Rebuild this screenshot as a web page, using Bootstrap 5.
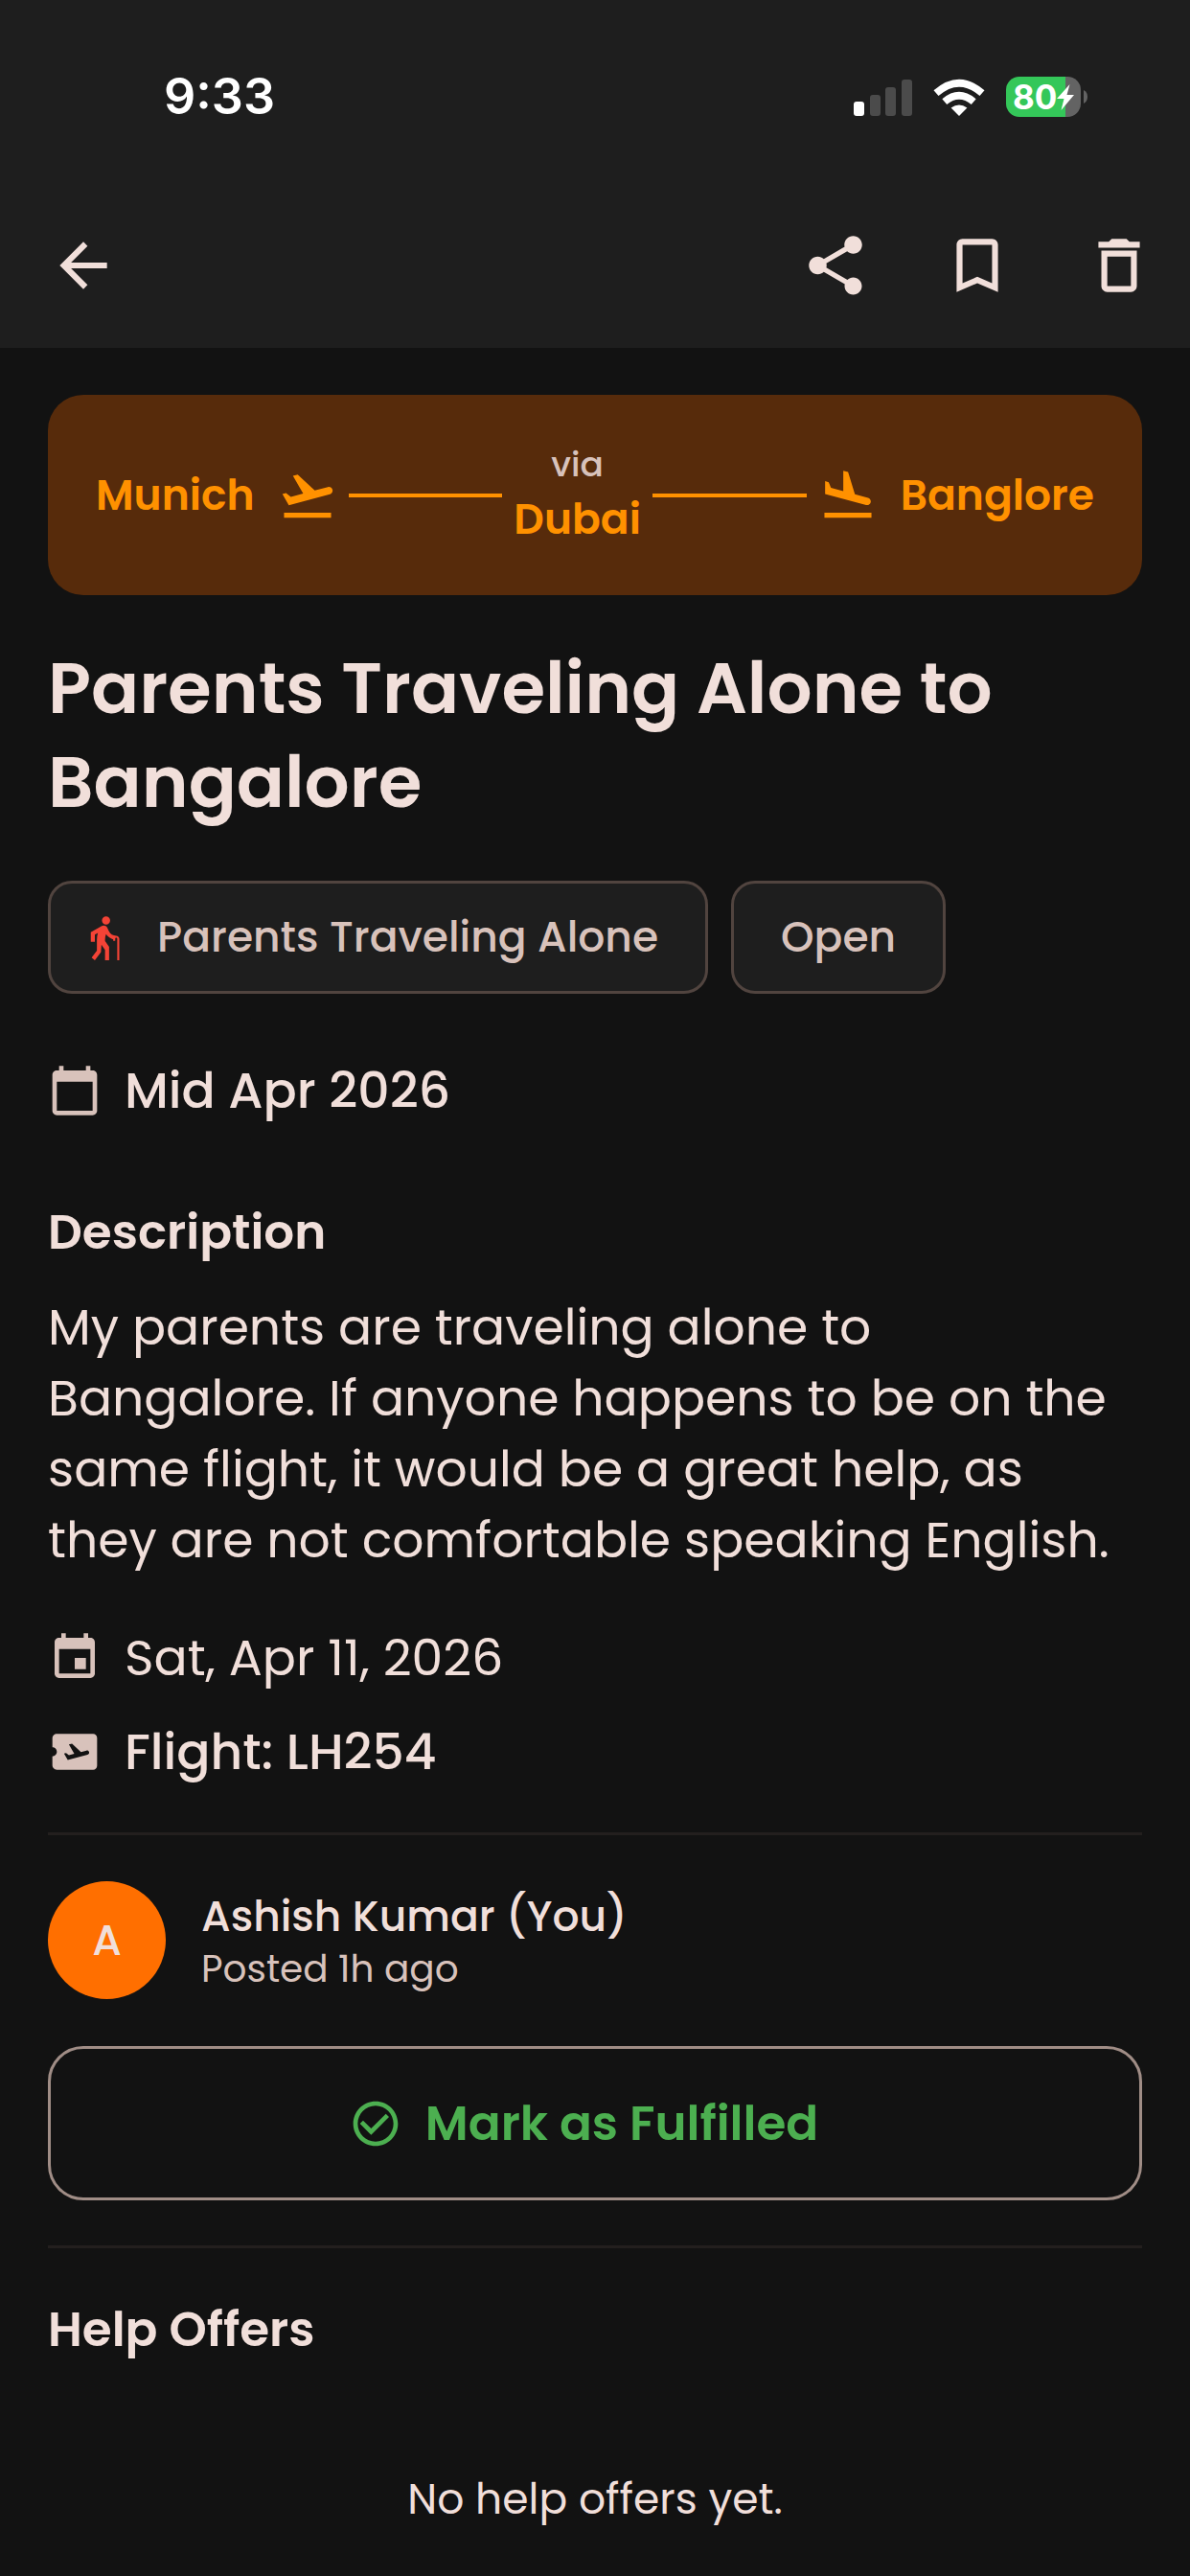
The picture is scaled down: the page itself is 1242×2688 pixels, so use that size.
<!DOCTYPE html>
<html lang="en" data-bs-theme="dark">
<head>
<meta charset="utf-8">
<meta name="viewport" content="width=device-width, initial-scale=1">
<title>Parents Traveling Alone to Bangalore</title>
<link rel="stylesheet" href="https://cdn.jsdelivr.net/npm/bootstrap@5.3.0/dist/css/bootstrap.min.css">
<style>
:root {
  --page: #121212;
  --surface: #1e1e1e;
  --ink: #f1dfda;
  --ink-soft: #d8c2bb;
  --accent: #ff9100;
}
body {
  background: var(--page);
  color: var(--ink);
  font-family: Poppins, Inter, "Open Sans", sans-serif;
  font-size: 44px;
  line-height: 64px;
}
h1, h2 { color: var(--ink); }
svg { display: block; flex: none; fill: currentColor; }

/* type scale */
.t-title { font-size: 74px; line-height: 98px; font-weight: 600; margin: 48px 0 54px; }
.t-heading { font-size: 50px; line-height: 74px; font-weight: 600; margin: 0; }
.t-line { font-size: 52px; line-height: 74px; }
.t-body { font-size: 52px; line-height: 74px; margin: 25px 0 49px; }
.t-small { font-size: 39px; color: var(--ink-soft); }
.w-medium { font-weight: 500; }

/* header */
.top-area { background: var(--surface); }
.status-row { color: #fff; padding: 67px 107px 55px 171px; font-family: Inter, sans-serif; }
.status-time { font-size: 52px; line-height: 68px; }
.status-icons { gap: 22px; }
.battery { gap: 3px; }
.battery-body {
  width: 78px; height: 42px; border-radius: 14px; padding-left: 7px;
  background: linear-gradient(90deg, #34c759 62px, #636363 62px);
  font-size: 35px; line-height: 42px;
}
.app-bar { height: 173px; }
.icon-btn { width: 148px; height: 148px; border: 0; color: var(--ink); }
.icon-btn.leading { width: 173px; }

.screen { padding: 49px 50px; }

/* route */
.route { background: #572b0b; color: var(--accent); border-radius: 37px; min-height: 209px; padding: 0 50px; gap: 12px; }
.route-end { gap: 24px; }
.route-leg { height: 4px; background: var(--accent); }
.route-via { font-size: 36px; line-height: 50px; color: var(--ink-soft); }

/* chips */
.chips { gap: 24px; margin-bottom: 64px; }
.chip {
  background: var(--surface); color: var(--ink-soft); border: 3px solid #51443f;
  border-radius: 25px; padding: 24px 49px;
}
.chip.with-icon { padding-left: 29px; gap: 31px; }
.chip svg { color: #f44336; }

.info { gap: 24px; }
.info svg { color: var(--ink-soft); }
.details { margin-top: 74px; }
.rule { height: 3px; background: #231f1e; opacity: 1; border: 0; margin: 47px 0 48px; }

/* author */
.author { gap: 37px; margin-bottom: 49px; }
.avatar { width: 123px; height: 123px; background: #ff6f00; }
.author-name { line-height: 60px; }
.author-time { line-height: 50px; }

.btn-fulfil {
  --bs-btn-color: #4caf50; --bs-btn-hover-color: #4caf50;
  --bs-btn-border-color: #a08d86; --bs-btn-hover-border-color: #a08d86;
  --bs-btn-border-width: 3px; --bs-btn-border-radius: 37px;
  --bs-btn-padding-y: 40px; --bs-btn-font-size: 50px; --bs-btn-font-weight: 600;
  line-height: 75px; gap: 24px; padding-right: 36px;
}
.empty { margin-top: 108px; }
</style>
</head>
<body>
<header class="top-area">
  <div class="status-row d-flex align-items-center justify-content-between">
    <span class="status-time fw-semibold">9:33</span>
    <div class="status-icons d-flex align-items-center">
      <svg width="61" height="39" viewBox="0 0 61 39" role="img" aria-label="Signal">
        <rect x="0" y="24" width="11" height="15" rx="3"/>
        <g fill="#4b4b4b"><rect x="17" y="17" width="11" height="22" rx="3"/><rect x="33" y="9" width="11" height="30" rx="3"/><rect x="50" y="1" width="11" height="38" rx="3"/></g>
      </svg>
      <svg width="54" height="39" viewBox="0 0 54 39" role="img" aria-label="Wi-Fi">
        <path d="M27 39 18.600 30.400Q27 24.600 35.400 30.400Z"/>
        <g fill="none" stroke="#fff" stroke-width="7.600"><path d="M3 15.200Q27-5.800 51 15.200"/><path d="M11.800 24.200Q27 11.400 42.200 24.200"/></g>
      </svg>
      <div class="battery d-flex align-items-center">
        <div class="battery-body d-flex align-items-center fw-bold">80
          <svg width="18" height="27" viewBox="0 0 18 27"><path d="M13.500 0 0 15h7.500L4.500 27 18 11h-7.500z"/></svg>
        </div>
        <svg width="4" height="14" viewBox="0 0 4 14"><path fill="#636363" d="M0 0q4 2 4 7t-4 7z"/></svg>
      </div>
    </div>
  </div>
  <nav class="app-bar d-flex align-items-center justify-content-between" aria-label="Actions">
    <button type="button" class="icon-btn leading bg-transparent p-0 d-flex align-items-center justify-content-center" aria-label="Back">
      <svg width="74" height="74" viewBox="0 0 24 24"><path d="M20 11H7.830l5.590-5.590L12 4l-8 8 8 8 1.410-1.410L7.830 13H20v-2z"/></svg>
    </button>
    <div class="d-flex">
      <button type="button" class="icon-btn bg-transparent p-0 d-flex align-items-center justify-content-center" aria-label="Share">
        <svg width="74" height="74" viewBox="0 0 24 24"><path d="M18 16.080c-.76 0-1.440.3-1.960.77L8.910 12.700c.05-.23.09-.46.09-.7s-.04-.47-.09-.7l7.050-4.110c.54.5 1.250.81 2.040.81 1.660 0 3-1.340 3-3s-1.340-3-3-3-3 1.340-3 3c0 .24.04.47.09.7L8.040 9.810C7.500 9.310 6.790 9 6 9c-1.660 0-3 1.340-3 3s1.340 3 3 3c.79 0 1.500-.31 2.040-.81l7.120 4.160c-.05.21-.08.43-.08.65 0 1.610 1.310 2.920 2.920 2.920s2.920-1.310 2.920-2.920-1.310-2.920-2.920-2.920z"/></svg>
      </button>
      <button type="button" class="icon-btn bg-transparent p-0 d-flex align-items-center justify-content-center" aria-label="Bookmark">
        <svg width="74" height="74" viewBox="0 0 24 24"><path d="M17 3H7c-1.100 0-2 .9-2 2v16l7-3 7 3V5c0-1.100-.9-2-2-2zm0 15-5-2.180L7 18V5h10v13z"/></svg>
      </button>
      <button type="button" class="icon-btn bg-transparent p-0 d-flex align-items-center justify-content-center" aria-label="Delete">
        <svg width="74" height="74" viewBox="0 0 24 24"><path d="M6 19c0 1.100.9 2 2 2h8c1.100 0 2-.9 2-2V7H6v12zM8 9h8v10H8V9zm7.500-5-1-1h-5l-1 1H5v2h14V4h-3.500z"/></svg>
      </button>
    </div>
  </nav>
</header>

<main class="screen">
  <section class="route d-flex align-items-center fw-semibold" aria-label="Route">
    <div class="route-end d-flex align-items-center">
      <span>Munich</span>
      <svg width="62" height="62" viewBox="0 0 24 24"><path d="M2.500 19h19v2h-19zM22.070 9.640c-.21-.8-1.040-1.280-1.840-1.060L14.920 10l-6.900-6.430-1.930.51 4.140 7.170-4.970 1.330-1.970-1.540-1.450.39 2.590 4.490L21 11.490c.81-.23 1.280-1.050 1.070-1.850z"/></svg>
    </div>
    <div class="route-leg flex-fill"></div>
    <div class="text-center">
      <div class="route-via w-medium">via</div>
      <div>Dubai</div>
    </div>
    <div class="route-leg flex-fill"></div>
    <div class="route-end d-flex align-items-center">
      <svg width="62" height="62" viewBox="0 0 24 24"><path d="M2.500 19h19v2h-19zM19.340 15.850c.8.210 1.620-.26 1.840-1.060.21-.8-.26-1.620-1.060-1.840l-5.310-1.420-2.760-9.020L10.120 2v8.280L5.150 8.950l-.93-2.320-1.450-.39v5.170l16.570 4.440z"/></svg>
      <span>Banglore</span>
    </div>
  </section>

  <h1 class="t-title">Parents Traveling Alone to Bangalore</h1>

  <div class="chips d-flex flex-wrap w-medium">
    <div class="chip with-icon d-flex align-items-center">
      <svg width="51" height="51" viewBox="0 0 24 24"><path d="M13.500 5.500c1.100 0 2-.9 2-2s-.9-2-2-2-2 .9-2 2 .9 2 2 2zM20 12.500V23h-1V12.500c0-.28-.22-.5-.5-.5s-.5.22-.5.5v1h-1v-.69c-1.460-.38-2.700-1.290-3.510-2.520-.31.87-.49 1.780-.49 2.710 0 .23.02.46.03.69L15 16.500V23h-2v-5l-1.780-2.540L11 19l-3 4-1.600-1.200L9 18.330V13c0-1.150.18-2.290.5-3.390L8 10.460V14H6V9.300l5.400-3.070v.01c.59-.31 1.320-.33 1.940.03.36.21.63.51.8.85l.79 1.670C15.580 10.100 16.940 11 18.500 11c.83 0 1.500.67 1.500 1.500z"/></svg>
      <span>Parents Traveling Alone</span>
    </div>
    <div class="chip">Open</div>
  </div>

  <div class="info d-flex align-items-center t-line w-medium">
    <svg width="56" height="56" viewBox="0 0 24 24"><path d="M20 3h-1V1h-2v2H7V1H5v2H4c-1.100 0-2 .9-2 2v16c0 1.100.9 2 2 2h16c1.100 0 2-.9 2-2V5c0-1.100-.9-2-2-2zm0 18H4V8h16v13z"/></svg>
    <span>Mid Apr 2026</span>
  </div>

  <section class="details">
    <h2 class="t-heading">Description</h2>
    <p class="t-body">My parents are traveling alone to Bangalore. If anyone happens to be on the same flight, it would be a great help, as they are not comfortable speaking English.</p>
  </section>

  <div class="info d-flex align-items-center t-line mb-4">
    <svg width="56" height="56" viewBox="0 0 24 24"><path d="M17 12h-5v5h5v-5zM16 1v2H8V1H6v2H5c-1.110 0-1.990.9-1.990 2L3 19c0 1.100.89 2 2 2h14c1.100 0 2-.9 2-2V5c0-1.100-.9-2-2-2h-1V1h-2zm3 18H5V8h14v11z"/></svg>
    <span>Sat, Apr 11, 2026</span>
  </div>
  <div class="info d-flex align-items-center t-line w-medium">
    <svg width="56" height="56" viewBox="0 0 24 24"><path d="M20.190 4H4C2.900 4 2.010 4.900 2.010 6v4c1.100 0 1.990.9 1.990 2s-.89 2-2 2v4c0 1.100.9 2 2 2h16.190c.99 0 1.810-.82 1.810-1.810V5.810C22 4.810 21.190 4 20.190 4zM17.730 13.300l-8.860 2.360-1.660-2.880.93-.25 1.260.99 2.390-.64-2.400-4.160 1.400-.38 4.010 3.740 2.440-.65c.51-.14 1.040.17 1.180.68.130.51-.17 1.040-.69 1.190z"/></svg>
    <span>Flight: LH254</span>
  </div>

  <hr class="rule">

  <div class="author d-flex align-items-center">
    <div class="avatar rounded-circle d-flex align-items-center justify-content-center w-medium">A</div>
    <div>
      <div class="author-name w-medium">Ashish Kumar (You)</div>
      <div class="author-time t-small">Posted 1h ago</div>
    </div>
  </div>

  <button type="button" class="btn btn-fulfil w-100 d-flex align-items-center justify-content-center">
    <svg width="56" height="56" viewBox="0 0 24 24"><path d="M16.590 7.580 10 14.170l-3.590-3.580L5 12l5 5 8-8-1.410-1.420zM12 2C6.480 2 2 6.480 2 12s4.480 10 10 10 10-4.480 10-10S17.520 2 12 2zm0 18c-4.420 0-8-3.580-8-8s3.580-8 8-8 8 3.580 8 8-3.580 8-8 8z"/></svg>
    <span>Mark as Fulfilled</span>
  </button>

  <hr class="rule">

  <section>
    <h2 class="t-heading">Help Offers</h2>
    <p class="empty text-center mb-0">No help offers yet.</p>
  </section>
</main>
<script src="https://cdn.jsdelivr.net/npm/bootstrap@5.3.0/dist/js/bootstrap.bundle.min.js"></script>
</body>
</html>
